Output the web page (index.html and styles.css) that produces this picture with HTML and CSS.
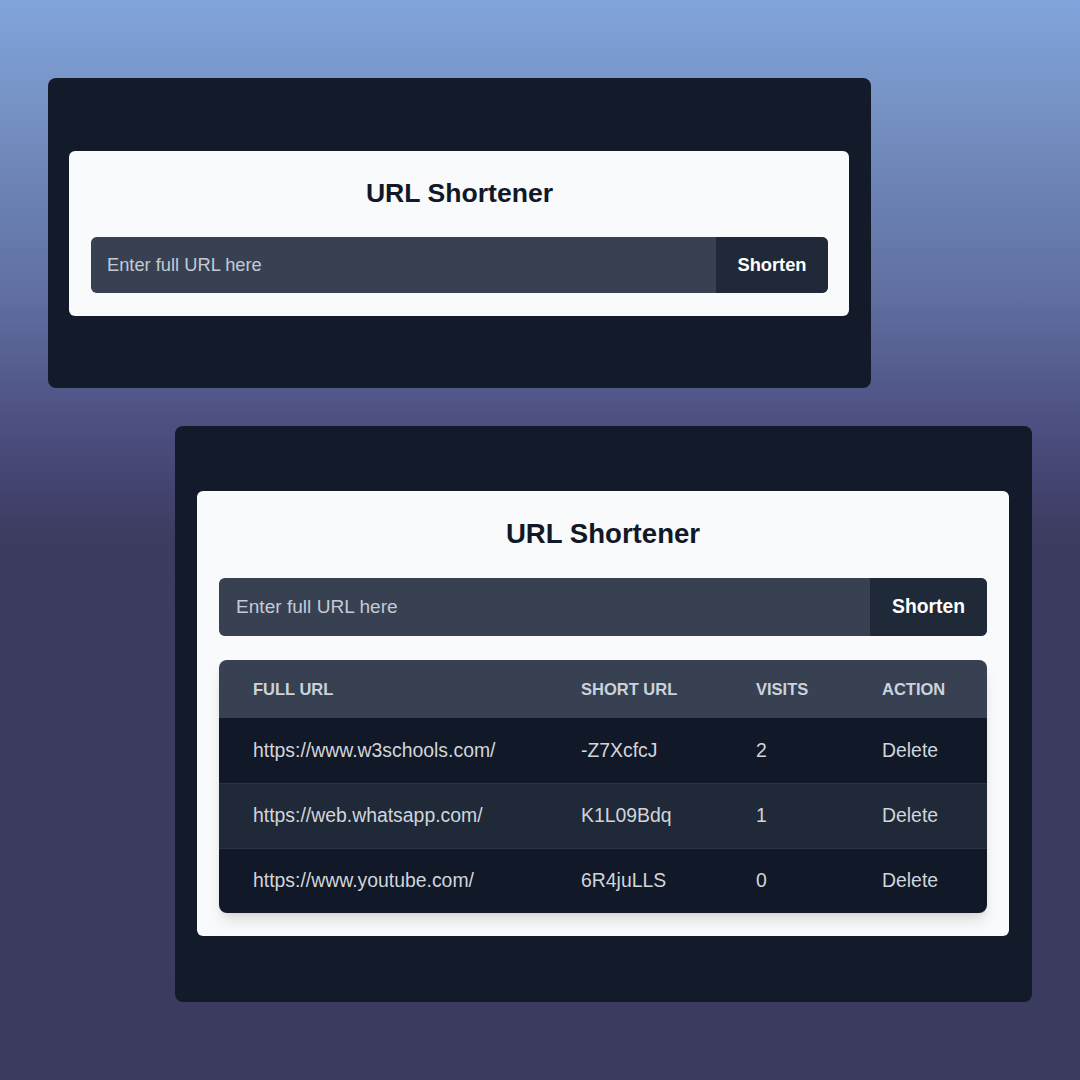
FILE: index.html
```html
<!DOCTYPE html>
<html lang="en">
<head>
<meta charset="utf-8">
<title>URL Shortener</title>
<link rel="stylesheet" href="styles.css">
</head>
<body>
<div class="desktop">
  <div class="window window-small">
    <div class="card">
      <h1 class="title">URL Shortener</h1>
      <form class="shorten-form">
        <input class="url-input" type="text" placeholder="Enter full URL here">
        <button class="shorten-btn" type="button">Shorten</button>
      </form>
    </div>
  </div>

  <div class="window window-large">
    <div class="card">
      <h1 class="title">URL Shortener</h1>
      <form class="shorten-form">
        <input class="url-input" type="text" placeholder="Enter full URL here">
        <button class="shorten-btn" type="button">Shorten</button>
      </form>
      <div class="table-wrap">
        <table class="url-table">
          <colgroup>
            <col class="col-full">
            <col class="col-short">
            <col class="col-visits">
            <col class="col-action">
          </colgroup>
          <thead>
            <tr><th>Full URL</th><th>Short URL</th><th>Visits</th><th>Action</th></tr>
          </thead>
          <tbody>
            <tr><td>https://www.w3schools.com/</td><td>-Z7XcfcJ</td><td>2</td><td>Delete</td></tr>
            <tr class="alt"><td>https://web.whatsapp.com/</td><td>K1L09Bdq</td><td>1</td><td>Delete</td></tr>
            <tr><td>https://www.youtube.com/</td><td>6R4juLLS</td><td>0</td><td>Delete</td></tr>
          </tbody>
        </table>
      </div>
    </div>
  </div>
</div>
</body>
</html>
```
FILE: styles.css
```css
html, body {
  margin: 0;
  padding: 0;
}
body {
  width: 1080px;
  height: 1080px;
  overflow: hidden;
  font-family: "Liberation Sans", Arial, sans-serif;
  background: linear-gradient(to bottom, #80a4dc 0px, #7895c8 90px, #5f6e9f 300px, #4a4c7d 440px, #3c3b60 540px, #3b3a5f 1080px);
}
.desktop {
  padding-top: 78px;
}
.window {
  background: #131a2a;
  border-radius: 8px;
  display: flex;
  box-sizing: border-box;
}
.window-small {
  margin-left: 48px;
  width: 823px;
  height: 310px;
  align-items: center;
  padding: 0 22px 0 21px;
}
.window-large {
  margin-left: 175px;
  margin-top: 38px;
  width: 857px;
  height: 576px;
  align-items: flex-start;
  padding: 65px 23px 0 22px;
}
.card {
  flex: 1;
  background: #f8fafc;
  border-radius: 6px;
  padding: 22px 22px 23px;
  display: flex;
  flex-direction: column;
  gap: 24px;
}
.window-small .card {
  padding-right: 21px;
}
.title {
  margin: 0;
  text-align: center;
  color: #111827;
  font-weight: 700;
  font-size: 26.6px;
  line-height: 40px;
}
.window-large .title {
  font-size: 27.6px;
  line-height: 41px;
}
.shorten-form {
  margin: 0;
  display: flex;
  height: 56px;
  border-radius: 6px;
  overflow: hidden;
  box-shadow: inset 0 0 0 1px #4b5563;
}
.window-large .shorten-form {
  height: 58px;
}
.url-input {
  flex: 1;
  min-width: 0;
  border: none;
  outline: none;
  background: #374151;
  color: #e5e7eb;
  font-family: inherit;
  font-size: 18.3px;
  padding: 0 16px;
  border-radius: 6px 0 0 6px;
}
.url-input::placeholder {
  color: #c3cad6;
}
.window-large .url-input {
  font-size: 19.1px;
  padding: 0 17px;
}
.shorten-btn {
  width: 112px;
  border: none;
  background: #1f2937;
  color: #ffffff;
  font-family: inherit;
  font-weight: 700;
  font-size: 18.3px;
  padding: 0;
}
.window-large .shorten-btn {
  width: 117px;
  font-size: 19.3px;
}
.table-wrap {
  border-radius: 8px;
  overflow: hidden;
  box-shadow: 0 10px 15px -3px rgba(0, 0, 0, 0.12), 0 4px 6px -2px rgba(0, 0, 0, 0.06);
}
.url-table {
  width: 100%;
  border-collapse: collapse;
  table-layout: fixed;
}
.col-full { width: 328px; }
.col-short { width: 175px; }
.col-visits { width: 126px; }
.col-action { width: auto; }
.url-table th {
  background: #374151;
  color: #cbd2dc;
  font-size: 16.5px;
  font-weight: 700;
  text-transform: uppercase;
  text-align: left;
  height: 58px;
  padding: 0 0 0 34px;
  box-sizing: border-box;
}
.url-table td {
  background: #111827;
  color: #d1d5db;
  font-size: 19.4px;
  height: 65px;
  padding: 0 0 0 34px;
  box-sizing: border-box;
  border-top: 1px solid #2b3445;
  white-space: nowrap;
}
.url-table tbody tr:first-child td {
  border-top: none;
  height: 65px;
}
.url-table tr.alt td {
  background: #1f2937;
}
```
